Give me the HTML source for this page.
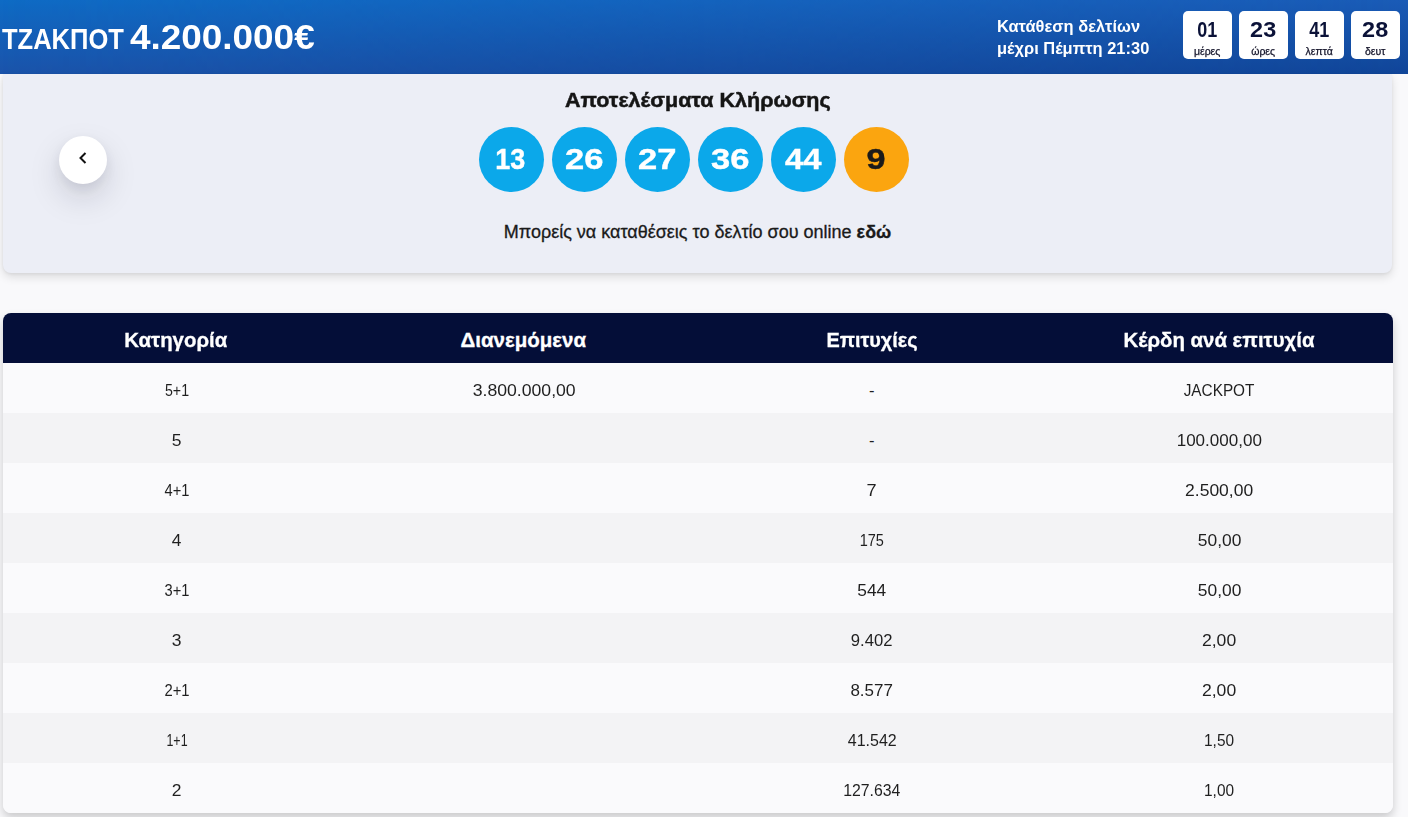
<!DOCTYPE html>
<html lang="el">
<head>
<meta charset="utf-8">
<title>ΤΖΟΚΕΡ - Αποτελέσματα Κλήρωσης</title>
<style>
*{box-sizing:border-box;margin:0;padding:0}
html,body{width:1408px;height:817px;overflow:hidden}
body{background:#f9f9fb;font-family:"Liberation Sans",sans-serif;color:#1a1a1a;position:relative}
.sx{display:inline-block;white-space:nowrap;transform-origin:0 50%}
.cx{display:inline-block;white-space:nowrap;transform-origin:50% 50%}
.hdr{position:absolute;left:0;top:0;width:1408px;height:74px;background:linear-gradient(180deg,#0e6bc5 0%,#1b53aa 100%);color:#fff}
.hdr:before{content:"";position:absolute;left:0;top:0;width:100%;height:100%;background:linear-gradient(180deg,#1a5bb6 0%,#104598 100%);-webkit-mask-image:linear-gradient(90deg,transparent,#000);mask-image:linear-gradient(90deg,transparent,#000)}
.jack{position:absolute;left:3px;top:19px;height:38px;line-height:38px;white-space:nowrap;font-weight:bold}
.jack .a{position:absolute;left:-1px;top:.6px;font-size:29.5px;transform:scaleX(.865)}
.jack .b{position:absolute;left:126.5px;top:-1.4px;font-size:34.6px;transform:scaleX(1.067)}
.dead{position:absolute;left:997px;top:16px;font-size:15.6px;line-height:21.5px;font-weight:bold;white-space:nowrap}
.dead .sx{display:block;transform:scaleX(1.055)}
.cd{position:absolute;top:11px;width:48.3px;height:48px;background:#fff;border-radius:5px;color:#0b1238;text-align:center}
.cd b{display:block;font-size:22.5px;line-height:22px;margin-top:8px}
.cd b.n{transform:scaleX(.8)}
.cd b.w{transform:scaleX(1.04)}
.cd span{display:block;font-size:10px;line-height:12px;margin-top:4.5px;color:#14142a;transform:scaleX(1.05);-webkit-text-stroke:.25px #14142a}
.panel{position:absolute;left:3px;top:74px;width:1389px;height:198.6px;background:#eceef6;border-radius:0 0 8px 8px;box-shadow:0 4px 10px rgba(0,0,0,.12),0 1px 3px rgba(0,0,0,.06)}
.panel h2{position:absolute;left:.5px;width:100%;top:13px;text-align:center;font-size:21px;line-height:26px;font-weight:bold;color:#151515;-webkit-text-stroke:.5px #151515}
.ball{position:absolute;top:53px;width:65px;height:65px;border-radius:50%;background:#0ba8ea;color:#fff;font-size:29px;font-weight:bold;line-height:65px;text-align:center;-webkit-text-stroke:.4px currentColor}
.ball.j{background:#fba50f;color:#1a1a1a}
.ball .cx{transform:scaleX(1.13)}
.note{position:absolute;left:0;width:100%;top:147px;text-align:center;font-size:18px;line-height:22px;color:#1a1a1a;-webkit-text-stroke:.3px #1a1a1a}
.prev{position:absolute;left:56px;top:62px;width:48px;height:48px;border-radius:50%;background:#fff;box-shadow:0 14px 32px rgba(20,20,40,.15),0 5px 12px rgba(20,20,40,.07)}
.prev svg{position:absolute;left:0;top:0}
.tw{position:absolute;left:3px;top:313px;width:1390px;height:500.3px;border-radius:8px;overflow:hidden;box-shadow:0 5px 10px rgba(0,0,0,.19)}
table{width:100%;border-collapse:collapse;table-layout:fixed}
th{height:50px;background:#040e38;color:#fff;font-size:20.5px;font-weight:bold;text-align:center;vertical-align:middle;padding-top:4px;-webkit-text-stroke:.3px #fff}
td{height:50px;text-align:center;font-size:16.5px;color:#1f1f1f;vertical-align:middle;padding-top:4px}
tbody tr:nth-child(odd) td{background:#fafafc}
tbody tr:nth-child(even) td{background:#f3f3f5}
</style>
</head>
<body>
<div class="hdr">
  <div class="jack"><span class="sx a">ΤΖΑΚΠΟΤ</span><span class="sx b">4.200.000€</span></div>
  <div class="dead"><span class="sx">Κατάθεση δελτίων</span><span class="sx">μέχρι Πέμπτη 21:30</span></div>
  <div class="cd" style="left:1183.45px"><b class="n">01</b><span>μέρες</span></div>
  <div class="cd" style="left:1239.45px"><b class="w">23</b><span>ώρες</span></div>
  <div class="cd" style="left:1295.45px"><b class="n">41</b><span>λεπτά</span></div>
  <div class="cd" style="left:1351.45px"><b class="w">28</b><span>δευτ</span></div>
</div>
<div class="panel">
  <h2><span class="cx" style="transform:scaleX(1.024)">Αποτελέσματα Κλήρωσης</span></h2>
  <div class="prev"><svg width="48" height="48" viewBox="0 0 48 48"><path d="M26.5 17 L21.5 22 L26.5 27" fill="none" stroke="#111" stroke-width="2"/></svg></div>
  <div class="ball" style="left:476px"><span class="cx" style="transform:scaleX(.93);position:relative;left:-1.2px">13</span></div>
  <div class="ball" style="left:549px"><span class="cx" style="transform:scaleX(1.19)">26</span></div>
  <div class="ball" style="left:622px"><span class="cx" style="transform:scaleX(1.19)">27</span></div>
  <div class="ball" style="left:695px"><span class="cx" style="transform:scaleX(1.19)">36</span></div>
  <div class="ball" style="left:768px"><span class="cx">44</span></div>
  <div class="ball j" style="left:841px"><span class="cx" style="transform:scaleX(1.18)">9</span></div>
  <div class="note"><span class="cx">Μπορείς να καταθέσεις το δελτίο σου online <b>εδώ</b></span></div>
</div>
<div class="tw">
<table>
  <thead><tr><th><span class="cx" style="transform:scaleX(.995);position:relative;left:-.8px">Κατηγορία</span></th><th><span class="cx" style="position:relative;left:-1px">Διανεμόμενα</span></th><th><span class="cx" style="transform:scaleX(0.97)">Επιτυχίες</span></th><th><span class="cx" style="transform:scaleX(0.995)">Κέρδη ανά επιτυχία</span></th></tr></thead>
  <tbody>
    <tr><td><span class="cx" style="transform:scaleX(0.86)">5+1</span></td><td><span class="cx" style="transform:scaleX(1.069)">3.800.000,00</span></td><td><span class="cx" style="transform:scaleX(1)">-</span></td><td><span class="cx" style="transform:scaleX(0.93)">JACKPOT</span></td></tr>
    <tr><td><span class="cx" style="transform:scaleX(1.06)">5</span></td><td></td><td><span class="cx" style="transform:scaleX(1)">-</span></td><td><span class="cx" style="transform:scaleX(1.032)">100.000,00</span></td></tr>
    <tr><td><span class="cx" style="transform:scaleX(0.89)">4+1</span></td><td></td><td><span class="cx" style="transform:scaleX(1.1)">7</span></td><td><span class="cx" style="transform:scaleX(1.061)">2.500,00</span></td></tr>
    <tr><td><span class="cx" style="transform:scaleX(1.05)">4</span></td><td></td><td><span class="cx" style="transform:scaleX(0.88)">175</span></td><td><span class="cx" style="transform:scaleX(1.055)">50,00</span></td></tr>
    <tr><td><span class="cx" style="transform:scaleX(0.889)">3+1</span></td><td></td><td><span class="cx" style="transform:scaleX(1.05)">544</span></td><td><span class="cx" style="transform:scaleX(1.055)">50,00</span></td></tr>
    <tr><td><span class="cx" style="transform:scaleX(1.06)">3</span></td><td></td><td><span class="cx" style="transform:scaleX(1.01)">9.402</span></td><td><span class="cx" style="transform:scaleX(1.065)">2,00</span></td></tr>
    <tr><td><span class="cx" style="transform:scaleX(0.897)">2+1</span></td><td></td><td><span class="cx" style="transform:scaleX(1.03)">8.577</span></td><td><span class="cx" style="transform:scaleX(1.065)">2,00</span></td></tr>
    <tr><td><span class="cx" style="transform:scaleX(0.755)">1+1</span></td><td></td><td><span class="cx" style="transform:scaleX(0.97)">41.542</span></td><td><span class="cx" style="transform:scaleX(0.935)">1,50</span></td></tr>
    <tr><td><span class="cx" style="transform:scaleX(1.06)">2</span></td><td></td><td><span class="cx" style="transform:scaleX(0.959)">127.634</span></td><td><span class="cx" style="transform:scaleX(0.935)">1,00</span></td></tr>
  </tbody>
</table>
</div>
</body>
</html>
